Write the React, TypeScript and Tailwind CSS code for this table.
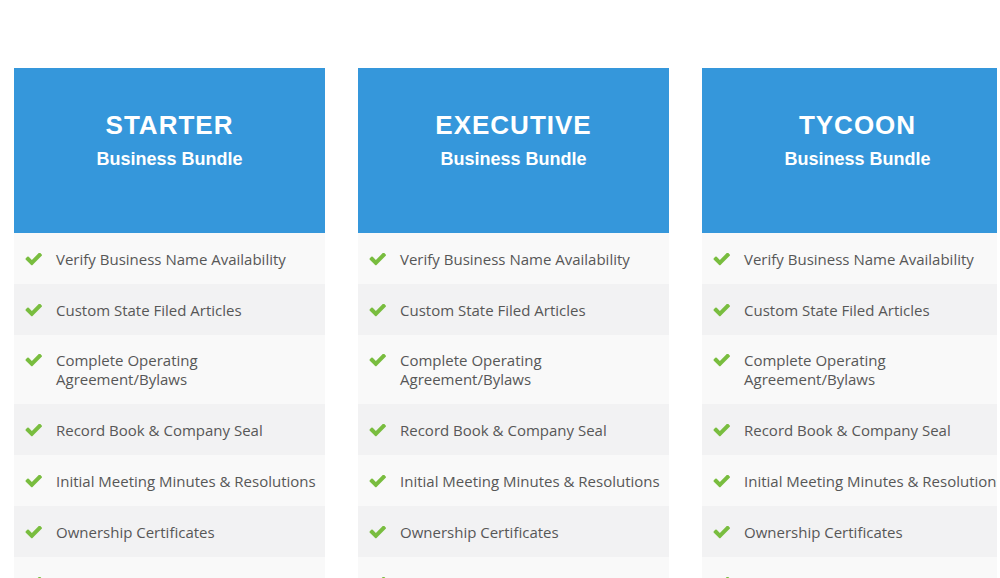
import React from "react";

const features: string[] = [
  "Verify Business Name Availability",
  "Custom State Filed Articles",
  "Complete Operating Agreement/Bylaws",
  "Record Book & Company Seal",
  "Initial Meeting Minutes & Resolutions",
  "Ownership Certificates",
  "IRS Tax ID Number (EIN)",
];

const plans = ["STARTER", "EXECUTIVE", "TYCOON"];

// font-awesome 4 style check (rounded, heavy)
const Check = () => (
  <svg
    viewBox="71 400 1600 1160"
    className="mt-[3px] w-[17px] h-[13px] shrink-0 fill-[#79bd3f]"
  >
    <path d="M1671 566q0 40-28 68l-724 724-136 136q-28 28-68 28t-68-28l-136-136-362-362q-28-28-28-68t28-68l136-136q28-28 68-28t68 28l294 295 656-657q28-28 68-28t68 28l136 136q28 28 28 68z" />
  </svg>
);

const PlanCard: React.FC<{ name: string }> = ({ name }) => {
  return (
    <div className="w-[311px] shrink-0">
      <div className="h-[165px] bg-[#3597db] pt-[42px] text-center text-white font-['Liberation_Sans',Arial,sans-serif] font-bold">
        <div className="text-[26px] leading-[30px] tracking-[1px]">{name}</div>
        <div className="mt-[8px] text-[18px] leading-[22px]">Business Bundle</div>
      </div>
      <div className="font-['Open_Sans',sans-serif] text-[15px] leading-[19px] text-[#575757]">
        {features.map((f, i) => (
          <div
            key={`feat-${name}-${i}`}
            className={`flex items-start pt-[16.7px] pb-[15.13px] pl-[11px] pr-2 ${
              i % 2 === 0 ? "bg-[#f9f9f9]" : "bg-[#f2f2f3]"
            }`}
          >
            <Check />
            <span className="ml-[14px] whitespace-nowrap">
              {f === "Complete Operating Agreement/Bylaws" ? (
                <>
                  Complete Operating
                  <br />
                  Agreement/Bylaws
                </>
              ) : (
                f
              )}
            </span>
          </div>
        ))}
      </div>
    </div>
  );
};

export default function App() {
  return (
    <div className="w-[1000px] h-[578px] overflow-hidden bg-white">
      <div className="w-[997px] overflow-hidden pt-[68px] pl-[14px] flex gap-[33px]">
        {plans.map((p) => (
          <PlanCard key={p} name={p} />
        ))}
      </div>
    </div>
  );
}
